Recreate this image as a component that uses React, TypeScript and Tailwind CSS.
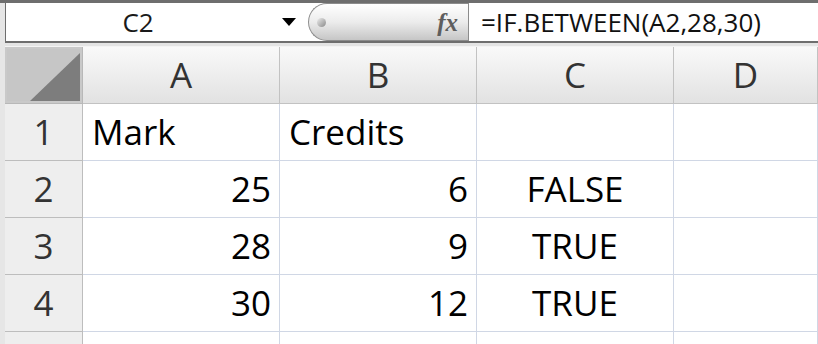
const font = { fontFamily: '"Open Sans", "Noto Sans", sans-serif' }

const cols = ['A', 'B', 'C', 'D']

type Cell = { v: string; align: 'left' | 'right' | 'center' }

const rows: Cell[][] = [
  [{ v: 'Mark', align: 'left' }, { v: 'Credits', align: 'left' }, { v: '', align: 'left' }, { v: '', align: 'left' }],
  [{ v: '25', align: 'right' }, { v: '6', align: 'right' }, { v: 'FALSE', align: 'center' }, { v: '', align: 'left' }],
  [{ v: '28', align: 'right' }, { v: '9', align: 'right' }, { v: 'TRUE', align: 'center' }, { v: '', align: 'left' }],
  [{ v: '30', align: 'right' }, { v: '12', align: 'right' }, { v: 'TRUE', align: 'center' }, { v: '', align: 'left' }],
  [{ v: '', align: 'left' }, { v: '', align: 'left' }, { v: '', align: 'left' }, { v: '', align: 'left' }],
]

const alignClass = {
  left: 'justify-start pl-[9px]',
  right: 'justify-end pr-[8px]',
  center: 'justify-center',
}

export default function App() {
  return (
    <div
      className="w-[818px] h-[344px] overflow-hidden bg-[#e6e6e6] border-t-[3px] border-[#6e6e6e] pl-[5px] text-black"
      style={font}
    >
      {/* formula bar */}
      <div className="flex h-[40px] bg-white border-l border-b-2 border-[#6e6e6e]">
        <div className="w-[264px] flex items-center justify-center text-[26px] text-[#1a1a1a]">C2</div>
        <div className="flex items-center ml-[12px] w-[26px]">
          <div className="w-0 h-0 border-l-[7px] border-r-[7px] border-t-[8px] border-l-transparent border-r-transparent border-t-black" />
        </div>
        <div className="w-[160px] h-full rounded-l-[20px] border border-r-0 border-[#8c8c8c] bg-gradient-to-b from-white via-[#ececec] to-[#c6c6c6] flex items-center pl-[8px] pr-[10px]">
          <div className="w-[9px] h-[9px] rounded-full bg-gradient-to-br from-[#eeeeee] to-[#8a8a8a]" />
          <span
            className="ml-auto text-[25px] italic font-bold text-[#5e5e5e] leading-none"
            style={{ fontFamily: '"Liberation Serif", "DejaVu Serif", serif' }}
          >
            fx
          </span>
        </div>
        <div className="w-px h-full bg-[#8c8c8c]" />
        <div className="flex items-center pl-[12px] text-[26px] text-[#111]">=IF.BETWEEN(A2,28,30)</div>
      </div>

      <div className="h-[4px] bg-[#e4e4e4] border-b border-[#f4f4f4]" />

      {/* grid */}
      <div className="grid grid-cols-[78px_197px_197px_197px_1fr] auto-rows-[57px]">
        <div className="bg-[#c9c9c9] border-r border-b border-[#b8b8b8] p-[2px] flex">
          <div className="flex-1 bg-[#c6c6c6] flex items-end justify-end">
            <svg width="50" height="48" viewBox="0 0 50 48">
              <polygon points="0,48 50,48 50,0" fill="#7d7d7d" />
            </svg>
          </div>
        </div>
        {cols.map((c) => (
          <div
            key={c}
            className="bg-gradient-to-b from-[#f9f9f9] to-[#e2e2e2] border-r border-b border-[#c2c2c2] flex items-center justify-center text-[35px] text-[#333]"
          >
            {c}
          </div>
        ))}

        {rows.map((row, i) => (
          <>
            <div
              key={`h${i}`}
              className="bg-[#eeeeee] border-r border-b border-[#bdbdbd] flex items-center justify-center text-[35px] text-[#333]"
            >
              {i < 4 ? i + 1 : ''}
            </div>
            {row.map((cell, j) => (
              <div
                key={`${i}-${j}`}
                className={`bg-white border-r border-b border-[#d0d7e5] flex items-end pb-[4px] text-[35px] leading-[48px] ${alignClass[cell.align]}`}
              >
                {cell.v}
              </div>
            ))}
          </>
        ))}
      </div>
    </div>
  )
}
